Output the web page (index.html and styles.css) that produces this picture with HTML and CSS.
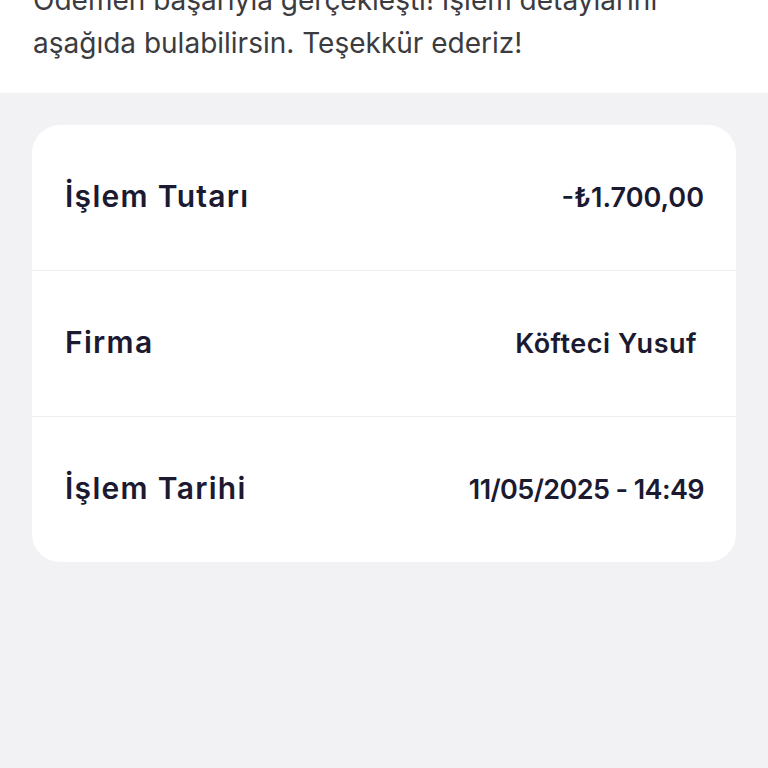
FILE: index.html
```html
<!DOCTYPE html>
<html lang="tr">
<head>
<meta charset="utf-8">
<link rel="stylesheet" href="styles.css">
</head>
<body>
<div class="page">
  <section class="intro">
    <p class="message">Ödemen başarıyla gerçekleşti! İşlem detaylarını aşağıda bulabilirsin. Teşekkür ederiz!</p>
  </section>
  <main class="content">
    <div class="card">
      <div class="row">
        <span class="label">İşlem Tutarı</span>
        <span class="value">-₺1.700,00</span>
      </div>
      <div class="row">
        <span class="label">Firma</span>
        <span class="value value-pad">Köfteci Yusuf</span>
      </div>
      <div class="row">
        <span class="label">İşlem Tarihi</span>
        <span class="value value-date">11/05/2025 - 14:49</span>
      </div>
    </div>
  </main>
</div>
</body>
</html>
```
FILE: styles.css
```css
html, body {
  margin: 0;
  padding: 0;
  background: #f2f2f4;
}
body {
  font-family: "Inter", "Open Sans", sans-serif;
  color: #1b1a31;
}
.page {
  width: 768px;
  height: 768px;
  overflow: hidden;
  display: flex;
  flex-direction: column;
}
.intro {
  background: #ffffff;
  height: 93px;
  padding: 0 32px;
  box-sizing: border-box;
  overflow: hidden;
}
.message {
  margin: -21px 0 0 1px;
  font-size: 28px;
  line-height: 43px;
  font-weight: 400;
  color: #3b3b40;
  width: 680px;
}
.content {
  flex: 1;
  padding: 32px 32px 0;
}
.card {
  background: #ffffff;
  border-radius: 28px;
  overflow: hidden;
}
.row {
  height: 145px;
  display: flex;
  align-items: center;
  justify-content: space-between;
  padding: 0 32px 0 33px;
  border-top: 1px solid #efeff2;
}
.row:first-child {
  border-top: none;
}
.label {
  font-size: 30px;
  font-weight: 600;
  letter-spacing: 1.3px;
  padding-bottom: 4px;
}
.value {
  font-size: 27px;
  font-weight: 600;
}
.value-pad {
  padding-right: 7px;
  letter-spacing: 0.5px;
}
.value-date {
  letter-spacing: -0.6px;
}
```
